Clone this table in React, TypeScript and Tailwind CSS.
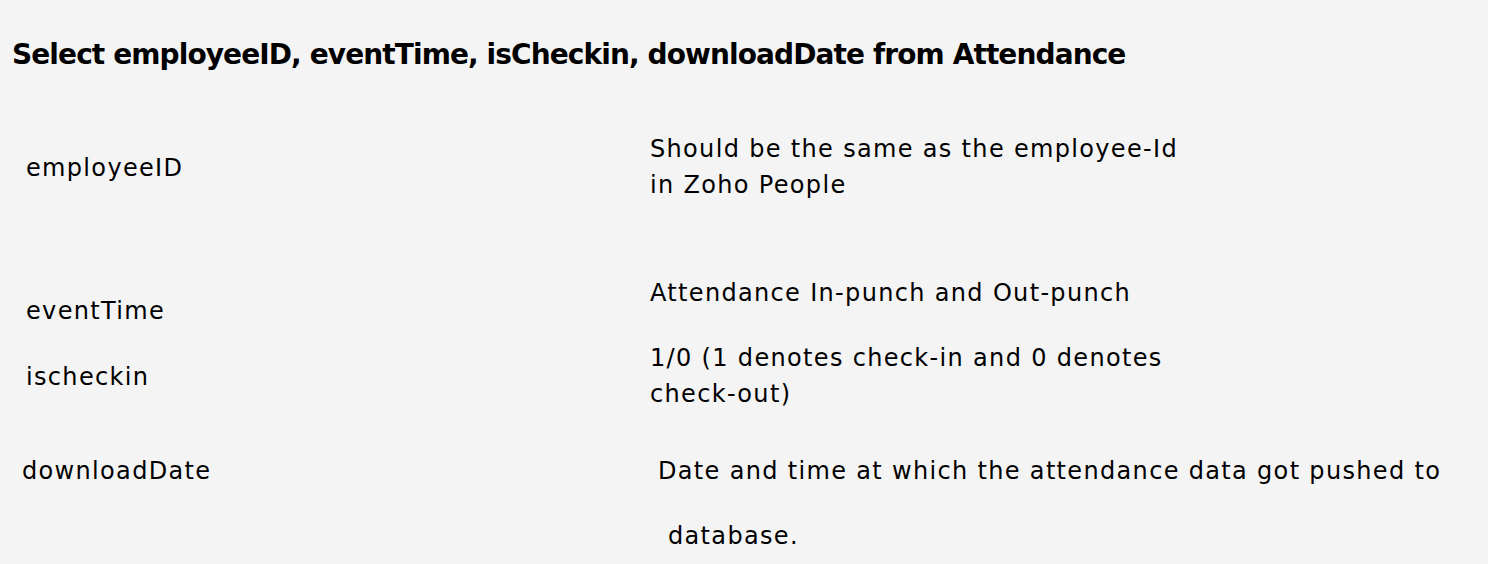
import React from "react";

const App: React.FC = () => {
  return (
    <div className="min-h-screen bg-[#f4f4f4] text-black font-['DejaVu_Sans',Verdana,sans-serif] text-[24px] leading-[36px] tracking-[1.33px]">
      <h1 className="pl-3 pt-[37px] text-[28px] font-bold leading-[36px] tracking-[-0.9px]">
        Select employeeID, eventTime, isCheckin, downloadDate from Attendance
      </h1>

      <div className="mt-[58px] grid grid-cols-[650px_1fr]">
        {/* employeeID */}
        <div className="pl-[26px] pt-[19px]">employeeID</div>
        <div>
          Should be the same as the employee-Id
          <br />
          in Zoho People
        </div>

        {/* eventTime */}
        <div className="pl-[26px] pt-[90px]">eventTime</div>
        <div className="pt-[72px]">Attendance In-punch and Out-punch</div>

        {/* ischeckin */}
        <div className="pl-[26px] pt-[30px]">ischeckin</div>
        <div className="pt-[11px]">
          1/0 (1 denotes check-in and 0 denotes
          <br />
          check-out)
        </div>

        {/* downloadDate */}
        <div className="pl-[22px] pt-[41px]">downloadDate</div>
        <div className="pt-[41px] pl-2">
          <p>Date and time at which the attendance data got pushed to</p>
          <p className="mt-[29px] pl-[10px]">database.</p>
        </div>
      </div>
    </div>
  );
};

export default App;
